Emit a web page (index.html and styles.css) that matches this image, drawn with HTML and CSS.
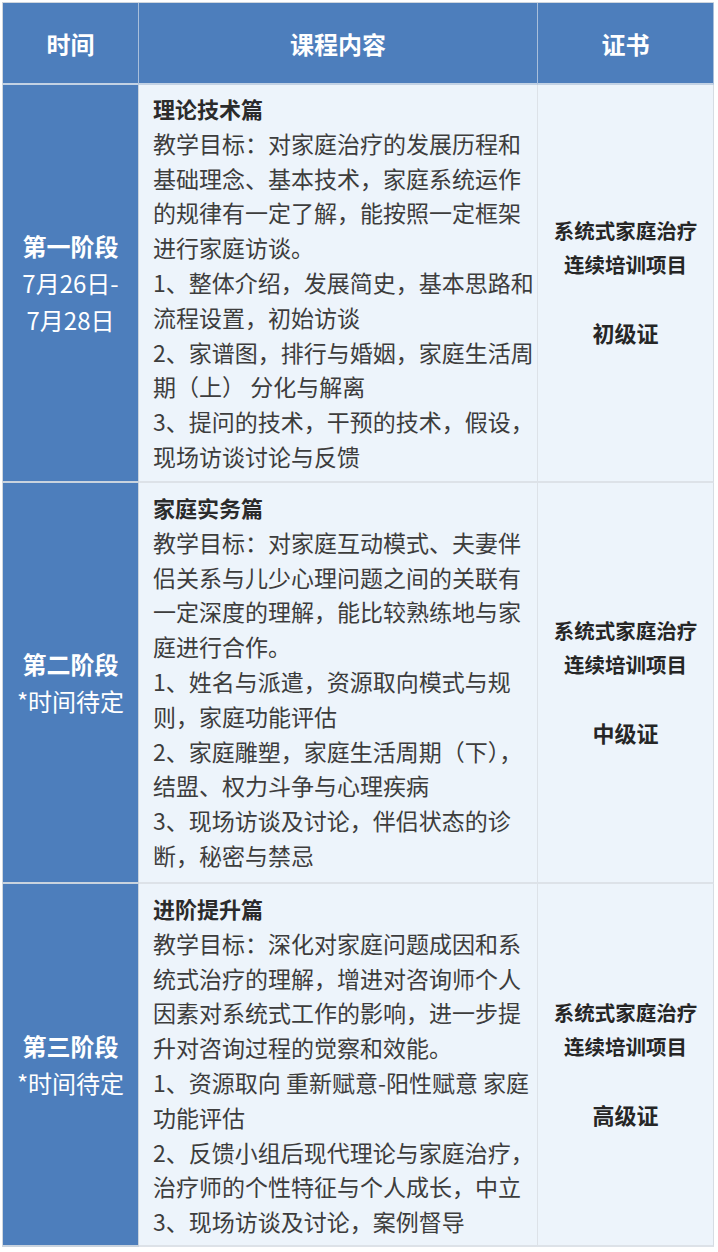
FILE: index.html
```html
<!DOCTYPE html>
<html lang="zh-CN">
<head>
<meta charset="utf-8">
<title>课程安排</title>
<link rel="stylesheet" href="styles.css">
</head>
<body>
<div class="plan">
  <div class="cell head">时间</div>
  <div class="cell head">课程内容</div>
  <div class="cell head last">证书</div>

  <div class="cell time r1"><div class="stage">第一阶段</div><div>7月26日-</div><div>7月28日</div></div>
  <div class="cell content r1">
    <div class="title">理论技术篇</div>
    <div>教学目标：对家庭治疗的发展历程和<br>基础理念、基本技术，家庭系统运作<br>的规律有一定了解，能按照一定框架<br>进行家庭访谈。</div>
    <div>1、整体介绍，发展简史，基本思路和<br>流程设置，初始访谈</div>
    <div>2、家谱图，排行与婚姻，家庭生活周<br>期（上） 分化与解离</div>
    <div>3、提问的技术，干预的技术，假设，<br>现场访谈讨论与反馈</div>
  </div>
  <div class="cell cert r1 last"><div>系统式家庭治疗</div><div>连续培训项目</div><div class="level">初级证</div></div>

  <div class="cell time r2"><div class="stage">第二阶段</div><div>*时间待定</div></div>
  <div class="cell content r2">
    <div class="title">家庭实务篇</div>
    <div>教学目标：对家庭互动模式、夫妻伴<br>侣关系与儿少心理问题之间的关联有<br>一定深度的理解，能比较熟练地与家<br>庭进行合作。</div>
    <div>1、姓名与派遣，资源取向模式与规<br>则，家庭功能评估</div>
    <div>2、家庭雕塑，家庭生活周期（下），<br>结盟、权力斗争与心理疾病</div>
    <div>3、现场访谈及讨论，伴侣状态的诊<br>断，秘密与禁忌</div>
  </div>
  <div class="cell cert r2 last"><div>系统式家庭治疗</div><div>连续培训项目</div><div class="level">中级证</div></div>

  <div class="cell time r3"><div class="stage">第三阶段</div><div>*时间待定</div></div>
  <div class="cell content r3">
    <div class="title">进阶提升篇</div>
    <div>教学目标：深化对家庭问题成因和系<br>统式治疗的理解，增进对咨询师个人<br>因素对系统式工作的影响，进一步提<br>升对咨询过程的觉察和效能。</div>
    <div>1、资源取向 重新赋意-阳性赋意 家庭<br>功能评估</div>
    <div>2、反馈小组后现代理论与家庭治疗，<br>治疗师的个性特征与个人成长，中立</div>
    <div>3、现场访谈及讨论，案例督导</div>
  </div>
  <div class="cell cert r3 last"><div>系统式家庭治疗</div><div>连续培训项目</div><div class="level">高级证</div></div>
</div>
</body>
</html>
```

FILE: styles.css
```css
html, body {
  margin: 0;
  padding: 0;
  background: #ffffff;
}

body {
  padding: 2px 0 0 2px;
  font-family: "Noto Sans CJK SC", "Noto Sans", sans-serif;
}

*, *::before, *::after {
  box-sizing: border-box;
}

.plan {
  display: grid;
  grid-template-columns: 136px 399px 176px;
  grid-template-rows: 82px 398px 401px 363px;
  width: 712px;
  border-left: 1px solid #cfd6de;
  border-top: 1px solid #cfd6de;
}

.cell {
  border-right: 1px solid #dde2e8;
  border-bottom: 2px solid #dde2e8;
  overflow: hidden;
}

.cell.last {
  border-right: 1px solid #d6dce3;
}

.head {
  display: flex;
  align-items: center;
  justify-content: center;
  background: #4d7ebc;
  color: #ffffff;
  font-size: 24px;
  font-weight: 700;
  border-right-color: #a9bfdb;
  border-bottom-color: #c3d2e4;
}

.head.last {
  border-right-color: #a9bfdb;
}

.time {
  display: flex;
  flex-direction: column;
  align-items: center;
  justify-content: center;
  background: #4d7ebc;
  color: #ffffff;
  font-size: 24px;
  line-height: 37px;
  border-right-color: #c9d3de;
  border-bottom-color: #c9d3de;
  padding-bottom: 2px;
}

.stage {
  font-weight: 700;
}

.content {
  background: #edf4fb;
  padding: 6px 0 0 14px;
  font-size: 23px;
  line-height: 34.8px;
  color: #3d3d3d;
  white-space: nowrap;
}

.content.r2,
.content.r3 {
  padding-top: 7px;
}

.title {
  font-weight: 700;
  font-size: 22px;
  color: #2b2b2b;
}

.cert {
  display: flex;
  flex-direction: column;
  align-items: center;
  justify-content: center;
  background: #edf4fb;
  font-size: 20.5px;
  font-weight: 700;
  line-height: 34px;
  color: #262626;
  padding-bottom: 4px;
}

.level {
  margin-top: 34px;
  font-size: 22px;
}
```
